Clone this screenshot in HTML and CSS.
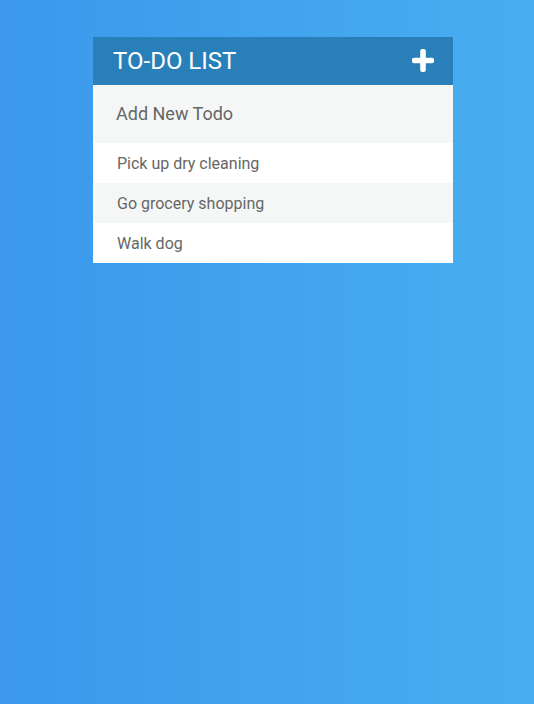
FILE: index.html
```html
<!DOCTYPE html>
<html>
<head>
<meta charset="utf-8">
<link rel="stylesheet" href="styles.css">
</head>
<body>
<div class="page">
  <div class="card">
    <div class="header">
      <h1 class="title">TO-DO LIST</h1>
      <svg class="plus" width="22" height="23" viewBox="0 0 22 23">
        <rect x="8.2" y="0" width="5.6" height="23" rx="2" fill="#fff"/>
        <rect x="0" y="8.7" width="22" height="5.6" rx="2" fill="#fff"/>
      </svg>
    </div>
    <div class="add">Add New Todo</div>
    <ul class="list">
      <li class="item">Pick up dry cleaning</li>
      <li class="item">Go grocery shopping</li>
      <li class="item">Walk dog</li>
    </ul>
  </div>
</div>
</body>
</html>
```
FILE: styles.css
```css
html, body {
  margin: 0;
  padding: 0;
  height: 100%;
}
body {
  background: linear-gradient(90deg, #3b98ec, #48aef0);
  font-family: Roboto, "Liberation Sans", sans-serif;
}
.page {
  padding: 37px 0 0 12px;
}
.card {
  width: 360px;
  margin: 0 auto;
  background: #fff;
}
.header {
  height: 48px;
  background: #2980b9;
  display: flex;
  align-items: center;
  justify-content: space-between;
  padding: 0 19px 0 20px;
}
.title {
  margin: 0;
  font-size: 24px;
  font-weight: 400;
  color: #fff;
  line-height: 48px;
}
.plus {
  display: block;
  margin-top: -1px;
}
.add {
  height: 58px;
  background: #f5f7f7;
  color: #666;
  font-size: 18px;
  line-height: 58px;
  padding-left: 23px;
}
.list {
  list-style: none;
  margin: 0;
  padding: 0;
}
.item {
  height: 40px;
  line-height: 41px;
  padding-left: 24px;
  color: #666;
  font-size: 16px;
  background: #fff;
}
.item:nth-child(2n) {
  background: #f5f7f7;
}
```
